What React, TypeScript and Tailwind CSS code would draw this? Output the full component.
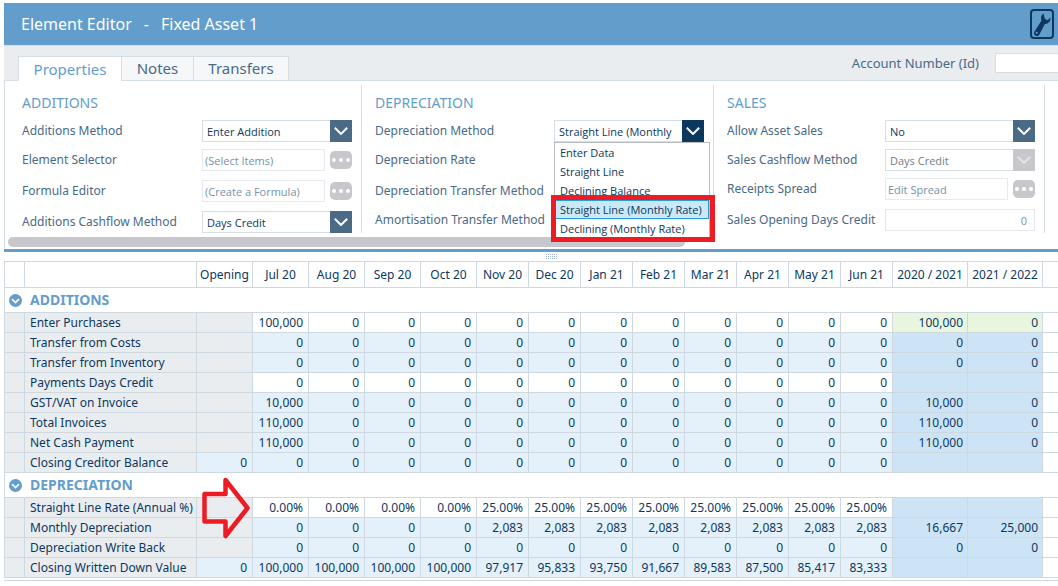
import type { ReactNode } from "react";

const months = [
  "Jul 20", "Aug 20", "Sep 20", "Oct 20", "Nov 20", "Dec 20",
  "Jan 21", "Feb 21", "Mar 21", "Apr 21", "May 21", "Jun 21",
];
const years = ["2020 / 2021", "2021 / 2022"];

interface Row {
  label: string;
  opening?: string;
  values: string[];
  totals: [string, string];
  editable?: boolean;
  highlight?: boolean;
  arrow?: boolean;
}

function zeros(first = "0"): string[] {
  return [first, ...Array<string>(11).fill("0")];
}

const additions: Row[] = [
  { label: "Enter Purchases", values: zeros("100,000"), totals: ["100,000", "0"], editable: true, highlight: true },
  { label: "Transfer from Costs", values: zeros(), totals: ["0", "0"] },
  { label: "Transfer from Inventory", values: zeros(), totals: ["0", "0"] },
  { label: "Payments Days Credit", values: zeros(), totals: ["", ""], editable: true },
  { label: "GST/VAT on Invoice", values: zeros("10,000"), totals: ["10,000", "0"] },
  { label: "Total Invoices", values: zeros("110,000"), totals: ["110,000", "0"] },
  { label: "Net Cash Payment", values: zeros("110,000"), totals: ["110,000", "0"] },
  { label: "Closing Creditor Balance", opening: "0", values: zeros(), totals: ["", ""] },
];

const depreciation: Row[] = [
  {
    label: "Straight Line Rate (Annual %)",
    values: [...Array<string>(4).fill("0.00%"), ...Array<string>(8).fill("25.00%")],
    totals: ["", ""],
    editable: true,
    arrow: true,
  },
  {
    label: "Monthly Depreciation",
    values: [...Array<string>(4).fill("0"), ...Array<string>(8).fill("2,083")],
    totals: ["16,667", "25,000"],
  },
  { label: "Depreciation Write Back", values: zeros(), totals: ["0", "0"] },
  {
    label: "Closing Written Down Value",
    opening: "0",
    values: [
      "100,000", "100,000", "100,000", "100,000", "97,917", "95,833",
      "93,750", "91,667", "89,583", "87,500", "85,417", "83,333",
    ],
    totals: ["", ""],
  },
];

const methods = [
  "Enter Data",
  "Straight Line",
  "Declining Balance",
  "Straight Line (Monthly Rate)",
  "Declining (Monthly Rate)",
];

function Chevron({ className }: { className: string }) {
  return (
    <span
      className={`pointer-events-none absolute inset-y-0 right-0 flex w-[22px] items-center justify-center ${className}`}
    >
      <svg width="14" height="8" viewBox="0 0 14 8" fill="none" stroke="currentColor" strokeWidth="2">
        <path d="M0.8 0.8 7 7 13.2 0.8" />
      </svg>
    </span>
  );
}

function Combo({ id, value, disabled, active }: { id: string; value: string; disabled?: boolean; active?: boolean }) {
  let tone = "bg-[#4a6a86] text-white";
  if (active) tone = "bg-[#0c3860] text-white";
  if (disabled) tone = "bg-[#c7c7cc] text-[#e4e4e7]";
  return (
    <div className="relative w-[150px]">
      <select
        id={id}
        disabled={disabled}
        defaultValue={value}
        className="block h-[22px] w-full appearance-none rounded-none border border-[#d5dde5] bg-white pt-0.5 pr-7 pl-1 font-['Open_Sans',sans-serif] text-[11px] text-[#0c3860] opacity-100 outline-none disabled:text-[#6f7f8e]"
      >
        {active ? methods.map((m) => <option key={m}>{m}</option>) : <option>{value}</option>}
      </select>
      <Chevron className={tone} />
      {active && <MethodMenu value={value} />}
    </div>
  );
}

function MethodMenu({ value }: { value: string }) {
  return (
    <div className="absolute top-full left-0 z-20 w-[156px]">
      <ul
        role="listbox"
        aria-label="Depreciation Method"
        className="border border-[#b9bdc2] bg-white font-['Open_Sans',sans-serif] text-[11px] text-[#0c3860]"
      >
        {methods.map((m) => (
          <li
            key={m}
            role="option"
            aria-selected={m === value}
            className="flex h-[19px] items-center border border-transparent px-1 pt-0.5 whitespace-nowrap aria-selected:border-[#26a0da] aria-selected:bg-[#cbe8f6]"
          >
            {m}
          </li>
        ))}
      </ul>
      <div className="absolute -right-[5px] -bottom-[3px] -left-[3px] h-[47px] border-5 border-[#ed1c24]" />
    </div>
  );
}

function Picker({ id, value, label }: { id: string; value: string; label: string }) {
  return (
    <div className="flex w-[150px] items-center justify-between">
      <input
        id={id}
        defaultValue={value}
        readOnly
        className="h-[22px] w-[123px] border border-[#e6eaee] bg-white px-0.5 font-['Open_Sans',sans-serif] text-[11px] text-[#7891a8] outline-none"
      />
      <button
        type="button"
        aria-label={`Open ${label}`}
        className="flex h-[18px] w-[22px] items-center justify-center gap-[3px] rounded-[5px] bg-[#c7c7cc]"
      >
        <i className="size-1 rounded-full bg-white" />
        <i className="size-1 rounded-full bg-white" />
        <i className="size-1 rounded-full bg-white" />
      </button>
    </div>
  );
}

function Field({ id, label, tall, children }: { id: string; label: string; tall?: boolean; children?: ReactNode }) {
  return (
    <div className={`flex items-start justify-between last:h-[22px] ${tall ? "h-[31px]" : "h-[29px]"}`}>
      <label htmlFor={id} className="leading-[22px] whitespace-nowrap">
        {label}
      </label>
      {children}
    </div>
  );
}

function Group({ title, className, children }: { title: string; className: string; children: ReactNode }) {
  return (
    <section className={`shrink-0 border-r border-[#d5dde5] text-xs ${className}`}>
      <h2 className="mt-2 mb-[7px] text-sm leading-5 text-[#629dcb]">{title}</h2>
      {children}
    </section>
  );
}

function SectionRow({ title }: { title: string }) {
  return (
    <tr className="h-[25px]">
      <th colSpan={18} scope="colgroup" className="border-t border-l border-[#ced8e1] p-0 text-left">
        <button type="button" className="flex items-center gap-2 pl-1 text-sm leading-5 font-bold text-[#629dcb]">
          <svg width="13" height="13" viewBox="0 0 13 13">
            <circle cx="6.5" cy="6.5" r="6.5" fill="#629dcb" />
            <path d="M3 5.2 6.5 8.6 10 5.2" fill="none" stroke="#fff" strokeWidth="1.8" />
          </svg>
          {title}
        </button>
      </th>
    </tr>
  );
}

const cell = "border-t border-l border-[#ced8e1] py-0 font-normal whitespace-nowrap";

function DataRow({ row }: { row: Row }) {
  const calc = row.editable ? "bg-white" : "bg-[#e4f1fa]";
  const total = row.highlight ? "bg-[#e9f6df]" : "bg-[#cce4f6]";
  return (
    <tr className="h-5 text-right">
      <td className={`${cell} bg-[#e9edf0]`} />
      <th scope="row" className={`${cell} bg-[#e9edf0] pl-[5px] text-left`}>
        {row.label}
      </th>
      <td className={`${cell} relative pr-[5px] ${row.opening ? "bg-[#e4f1fa]" : "bg-[#e9edf0]"}`}>
        {row.opening}
        {row.arrow && (
          <svg className="absolute -top-[22px] left-[5px] z-10" width="50" height="64" viewBox="0 0 50 64">
            <path
              d="M2.5 18h21V4l22 28-22 28V45.5h-21z"
              fill="none"
              stroke="#ed1c24"
              strokeWidth="4.5"
              strokeLinejoin="round"
            />
          </svg>
        )}
      </td>
      {row.values.map((v, i) => (
        <td key={months[i]} className={`${cell} pr-[5px] ${calc}`}>
          {v}
        </td>
      ))}
      {row.totals.map((v, i) => (
        <td key={years[i]} className={`${cell} pr-1 ${total}`}>
          {v}
        </td>
      ))}
      <td className={cell} />
    </tr>
  );
}

function ForecastTable() {
  return (
    <div className="border-b border-[#ced8e1] pb-0.5">
      <table className="w-full min-w-[1054px] table-fixed border-separate border-spacing-0 border-b border-[#ced8e1] text-xs leading-[18px] text-[#0c3860]">
        <colgroup>
          <col className="w-5" />
          <col className="w-[172px]" />
          <col span={5} className="w-14" />
          <col span={8} className="w-[52px]" />
          <col span={2} className="w-[75px]" />
          <col />
        </colgroup>
        <thead>
          <tr className="h-[26px]">
            <td className={cell} />
            <td className={cell} />
            {["Opening", ...months, ...years].map((h) => (
              <th key={h} scope="col" className={`${cell} px-0 text-center`}>
                {h}
              </th>
            ))}
            <td className={cell} />
          </tr>
        </thead>
        <tbody>
          <SectionRow title="ADDITIONS" />
          {additions.map((r) => (
            <DataRow key={r.label} row={r} />
          ))}
          <SectionRow title="DEPRECIATION" />
          {depreciation.map((r) => (
            <DataRow key={r.label} row={r} />
          ))}
        </tbody>
      </table>
    </div>
  );
}

export default function App() {
  return (
    <div className="overflow-hidden bg-white pt-[3px] pl-1 font-['Noto_Sans',sans-serif] text-[13px] text-[#4a6a86]">
      <header className="flex h-[42px] items-center justify-between bg-[#629dcb] pr-1 pl-[17px]">
        <h1 className="flex gap-3 text-base text-white">
          <span>Element Editor</span>
          <span>-</span>
          <span>Fixed Asset 1</span>
        </h1>
        <button
          type="button"
          aria-label="Settings"
          className="flex h-[30px] w-6 items-center justify-center rounded-sm border-2 border-[#0c3860] text-[#0c3860]"
        >
          <svg width="18" height="24" viewBox="0 0 18 24" fill="currentColor">
            <path d="M10.5 1.5C8 3 7.5 6 8.5 8.5L1.5 19.5a2.8 2.8 0 0 0 4.8 3.2L11.8 12c3 .3 6-2.3 5.7-6.5L14.5 8.2 11.8 6.8z" />
            <circle cx="3.7" cy="20.8" r="1.1" fill="#629dcb" />
          </svg>
        </button>
      </header>

      <div className="flex h-9 items-end justify-between border-t border-b border-[#d5dde5] bg-[#e9edf0] pl-3.5">
        <nav className="-mb-px flex items-end text-[15px]">
          <button type="button" className="h-[25px] w-[104px] border border-b-0 border-[#d5dde5] bg-white text-[#629dcb]">
            Properties
          </button>
          <button type="button" className="h-[25px] w-[72px] border-t border-r border-b border-[#d5dde5] bg-[#f5f7f9]">
            Notes
          </button>
          <button type="button" className="h-[25px] w-[95px] border-t border-r border-b border-[#d5dde5] bg-[#f5f7f9]">
            Transfers
          </button>
        </nav>
        <div className="flex items-center gap-4 self-center">
          <label htmlFor="account" className="leading-[22px]">
            Account Number (Id)
          </label>
          <input id="account" className="h-5 w-[63px] border border-r-0 border-[#d5dde5] bg-white px-1 outline-none" />
        </div>
      </div>

      <main>
        <div className="border-l border-[#d5dde5] pt-1 pb-0.5">
          <div className="flex">
            <Group title="ADDITIONS" className="w-[357px] pr-[9px] pl-[17px]">
              <Field id="additions-method" label="Additions Method">
                <Combo id="additions-method" value="Enter Addition" />
              </Field>
              <Field id="selector" label="Element Selector" tall>
                <Picker id="selector" value="(Select Items)" label="Element Selector" />
              </Field>
              <Field id="formula" label="Formula Editor" tall>
                <Picker id="formula" value="(Create a Formula)" label="Formula Editor" />
              </Field>
              <Field id="cashflow" label="Additions Cashflow Method">
                <Combo id="cashflow" value="Days Credit" />
              </Field>
            </Group>
            <Group title="DEPRECIATION" className="w-[352px] pr-[9px] pl-[13px]">
              <Field id="dep-method" label="Depreciation Method">
                <Combo id="dep-method" value="Straight Line (Monthly Rate)" active />
              </Field>
              <Field id="dep-rate" label="Depreciation Rate" tall />
              <Field id="dep-transfer" label="Depreciation Transfer Method" />
              <Field id="amortisation" label="Amortisation Transfer Method" />
            </Group>
            <Group title="SALES" className="w-[331px] pr-[9px] pl-[13px]">
              <Field id="allow-sales" label="Allow Asset Sales">
                <Combo id="allow-sales" value="No" />
              </Field>
              <Field id="sales-cashflow" label="Sales Cashflow Method">
                <Combo id="sales-cashflow" value="Days Credit" disabled />
              </Field>
              <Field id="spread" label="Receipts Spread" tall>
                <Picker id="spread" value="Edit Spread" label="Receipts Spread" />
              </Field>
              <Field id="days-credit" label="Sales Opening Days Credit">
                <input
                  id="days-credit"
                  defaultValue="0"
                  readOnly
                  className="h-[22px] w-[150px] border border-[#e6eaee] bg-white px-[7px] text-right font-['Open_Sans',sans-serif] text-[11px] text-[#7891a8] outline-none"
                />
              </Field>
            </Group>
          </div>
          <div className="mt-1 ml-[3px] h-2.5 w-[677px] rounded-full bg-[#c7c7cc]" />
        </div>
        <div className="h-[3px] bg-[#629dcb]" />
        <div className="flex h-[9px] items-center justify-center pl-[41px]">
          <svg width="12" height="5" viewBox="0 0 12 5" stroke="#9fb4c8" strokeDasharray="1 1">
            <path d="M0 .5h12M0 2.5h12M0 4.5h12" />
          </svg>
        </div>
        <ForecastTable />
      </main>
    </div>
  );
}
